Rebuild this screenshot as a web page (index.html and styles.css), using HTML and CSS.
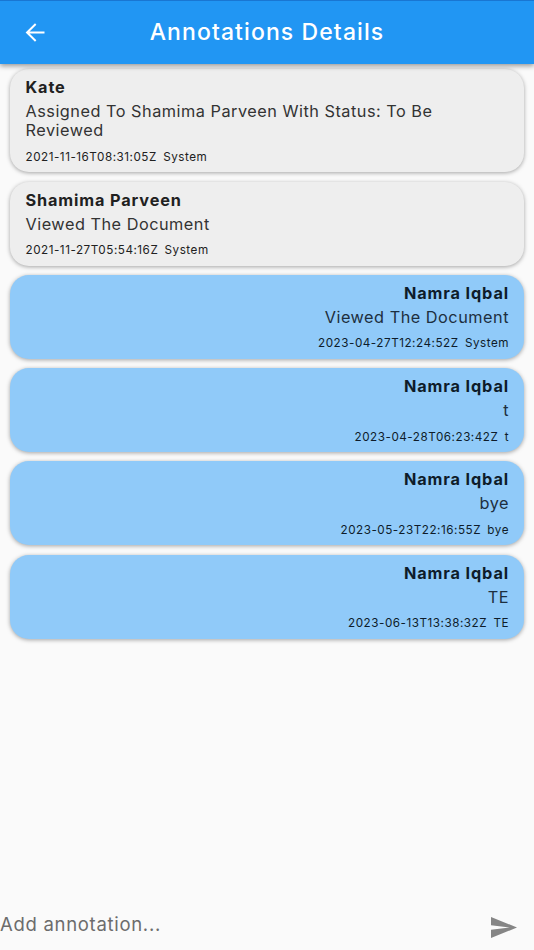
FILE: index.html
```html
<!DOCTYPE html>
<html lang="en">
<head>
    <meta charset="UTF-8">
    <meta name="viewport" content="width=device-width, initial-scale=1.0">
    <title>Annotations Details</title>
    <link rel="stylesheet" href="styles.css">
</head>
<body>
    <header class="app-bar">
        <button type="button" class="icon-btn back-btn" aria-label="Back">
            <svg viewBox="4 4 16 16" width="20" height="19"><path d="M20 11.2H7.4l5.75-5.75L12 4.3l-7.9 7.7 7.9 7.7 1.15-1.15L7.4 12.8H20v-1.6z"/></svg>
        </button>
        <h1>Annotations Details</h1>
    </header>

    <main class="annotations">
        <article class="card">
            <h2>Kate</h2>
            <p class="message">Assigned To Shamima Parveen With Status: To Be Reviewed</p>
            <p class="meta"><span>2021-11-16T08:31:05Z</span><span>System</span></p>
        </article>
        <article class="card">
            <h2>Shamima Parveen</h2>
            <p class="message">Viewed The Document</p>
            <p class="meta"><span>2021-11-27T05:54:16Z</span><span>System</span></p>
        </article>
        <article class="card own">
            <h2>Namra Iqbal</h2>
            <p class="message">Viewed The Document</p>
            <p class="meta"><span>2023-04-27T12:24:52Z</span><span>System</span></p>
        </article>
        <article class="card own">
            <h2>Namra Iqbal</h2>
            <p class="message">t</p>
            <p class="meta"><span>2023-04-28T06:23:42Z</span><span>t</span></p>
        </article>
        <article class="card own">
            <h2>Namra Iqbal</h2>
            <p class="message">bye</p>
            <p class="meta"><span>2023-05-23T22:16:55Z</span><span>bye</span></p>
        </article>
        <article class="card own">
            <h2>Namra Iqbal</h2>
            <p class="message">TE</p>
            <p class="meta"><span>2023-06-13T13:38:32Z</span><span>TE</span></p>
        </article>
    </main>

    <form class="composer">
        <input type="text" name="annotation" placeholder="Add annotation..." aria-label="Add annotation">
        <button type="button" class="icon-btn send-btn" aria-label="Send">
            <svg viewBox="2 3 21 18" width="26" height="21" preserveAspectRatio="none"><path d="M2.01 21L23 12 2.01 3 2 10l15 2-15 2z"/></svg>
        </button>
    </form>
</body>
</html>
```

FILE: styles.css
```css
* {
    box-sizing: border-box;
}

body {
    margin: 0;
    height: 100vh;
    display: flex;
    flex-direction: column;
    background-color: #fafafa;
    font-family: Inter, Roboto, sans-serif;
    color: #212121;
    overflow: hidden;
}

h1, h2, p {
    margin: 0;
}

.icon-btn {
    display: flex;
    padding: 0;
    border: none;
    background: none;
    cursor: pointer;
}

.icon-btn svg {
    fill: currentColor;
}

/* Top bar */
.app-bar {
    position: relative;
    z-index: 1;
    display: grid;
    grid-template-columns: 60px 1fr 60px;
    align-items: center;
    height: 64px;
    flex-shrink: 0;
    border-top: 1px solid #1976d2;
    background-color: #2196f3;
    color: #fff;
    box-shadow: 0 2px 5px rgba(0, 0, 0, 0.4);
}

.back-btn {
    margin-left: 25px;
    padding-bottom: 1px;
    color: #fff;
}

.app-bar h1 {
    padding-bottom: 1px;
    text-align: center;
    font-size: 23px;
    font-weight: 450;
    letter-spacing: 1.1px;
}

/* Annotation list */
.annotations {
    flex: 1;
    display: flex;
    flex-direction: column;
    gap: 9.3px;
    padding: 4.8px 10px 0;
}

.card {
    padding: 9px 15.5px 8.5px;
    border-radius: 19px;
    background-color: #eee;
    box-shadow: 0 1px 4px rgba(0, 0, 0, 0.35);
}

.card h2 {
    margin-bottom: 4.7px;
    font-size: 16.3px;
    font-weight: 700;
    line-height: 19.4px;
    letter-spacing: 0.86px;
}

.message {
    margin-bottom: 9px;
    font-size: 16.3px;
    line-height: 19.4px;
    letter-spacing: 0.5px;
    color: #333;
}

.meta {
    display: flex;
    gap: 6.3px;
    font-size: 11.7px;
    line-height: 14px;
    letter-spacing: 0.52px;
}

.own {
    padding-right: 15px;
    background-color: #90caf9;
    text-align: right;
    color: #0e1c2a;
}

.own .message {
    color: #1d2f40;
}

.own .meta {
    justify-content: flex-end;
}

/* Input row */
.composer {
    display: flex;
    align-items: center;
    height: 46px;
    padding-right: 17px;
}

.composer input {
    flex: 1;
    padding: 0 0 6px;
    border: none;
    outline: none;
    background: none;
    font-family: inherit;
    font-size: 18.5px;
    letter-spacing: 0.7px;
}

.composer input::placeholder {
    color: #6c6c6c;
}

.send-btn {
    color: #858585;
}
```
